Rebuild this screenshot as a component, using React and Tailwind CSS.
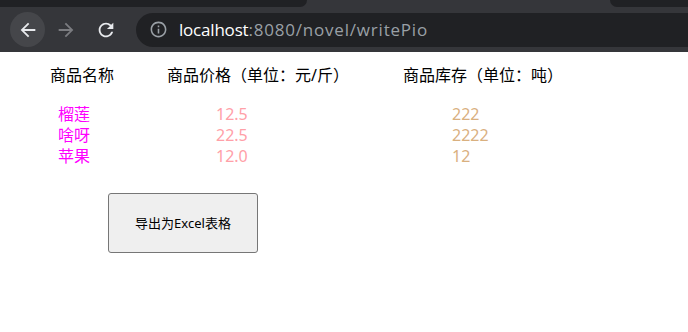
import React from "react";

const rows = [
  { name: "榴莲", price: "12.5", stock: "222" },
  { name: "啥呀", price: "22.5", stock: "2222" },
  { name: "苹果", price: "12.0", stock: "12" },
];

const BrowserBar = () => (
  <div className="bg-[#35363a]">
    {/* tab strip */}
    <div className="flex h-[7px]">
      <div className="w-[307px] bg-[#202124] rounded-br-[8px]"></div>
      <div className="flex-1"></div>
      <div className="w-[78px] bg-[#202124] rounded-bl-[8px]"></div>
    </div>
    {/* toolbar */}
    <div className="flex items-center h-[45px] pl-[10px]">
      <div className="w-[35px] h-[35px] rounded-full bg-[#45464a] flex items-center justify-center">
        <svg width="22" height="22" viewBox="0 0 24 24" fill="#e8eaed">
          <path d="M20 11H7.83l5.59-5.59L12 4l-8 8 8 8 1.41-1.41L7.83 13H20v-2z" />
        </svg>
      </div>
      <div className="w-[40px] flex items-center justify-center ml-[1px]">
        <svg width="22" height="22" viewBox="0 0 24 24" fill="#7b7c80">
          <path d="M12 4l-1.41 1.41L16.17 11H4v2h12.17l-5.58 5.59L12 20l8-8z" />
        </svg>
      </div>
      <div className="w-[40px] flex items-center justify-center">
        <svg width="22" height="22" viewBox="0 0 24 24" fill="#e8eaed">
          <path d="M17.65 6.35A7.958 7.958 0 0012 4c-4.42 0-7.99 3.58-7.99 8s3.57 8 7.99 8c3.73 0 6.84-2.55 7.73-6h-2.08A5.99 5.99 0 0112 18c-3.31 0-6-2.69-6-6s2.69-6 6-6c1.66 0 3.14.69 4.22 1.78L13 11h7V4l-2.35 2.35z" />
        </svg>
      </div>
      <div className="flex-1 h-[34px] ml-[10px] rounded-l-full bg-[#202124] flex items-center pl-[13px]">
        <svg width="19" height="19" viewBox="0 0 24 24" fill="#9aa0a6">
          <path d="M11 7h2v2h-2zm0 4h2v6h-2zm1-9C6.48 2 2 6.48 2 12s4.48 10 10 10 10-4.48 10-10S17.52 2 12 2zm0 18c-4.41 0-8-3.59-8-8s3.59-8 8-8 8 3.59 8 8-3.59 8-8 8z" />
        </svg>
        <span className="ml-[11px] text-[17px] font-['Open_Sans',sans-serif]">
          <span className="text-white tracking-[-0.2px]">localhost</span>
          <span className="text-[#9aa0a6] tracking-[0.8px]">:8080/novel/writePio</span>
        </span>
      </div>
    </div>
  </div>
);

export default function App() {
  return (
    <div className="w-[688px] h-[332px] bg-white overflow-hidden font-['Noto_Sans','Noto_Sans_CJK_SC',sans-serif]">
      <BrowserBar />
      <div className="text-[16px] leading-[21px]">
        <div className="flex pl-[50px] pt-[13px] text-black">
          <div className="w-[117px]">商品名称</div>
          <div className="w-[236px]">商品价格（单位：元/斤）</div>
          <div>商品库存（单位：吨）</div>
        </div>
        <div className="pt-[18px]">
          {rows.map((r) => (
            <div key={r.name} className="flex pl-[58px]">
              <div className="w-[158px] text-[#ff00ff]">{r.name}</div>
              <div className="w-[236px] text-[#ffa0a8]">{r.price}</div>
              <div className="text-[#d9b07f]">{r.stock}</div>
            </div>
          ))}
        </div>
        <div className="pl-[108px] pt-[26px]">
          <button className="w-[150px] h-[60px] bg-[#efefef] border border-[#767676] rounded-[3px] text-[13px] text-black">
            导出为Excel表格
          </button>
        </div>
      </div>
    </div>
  );
}
